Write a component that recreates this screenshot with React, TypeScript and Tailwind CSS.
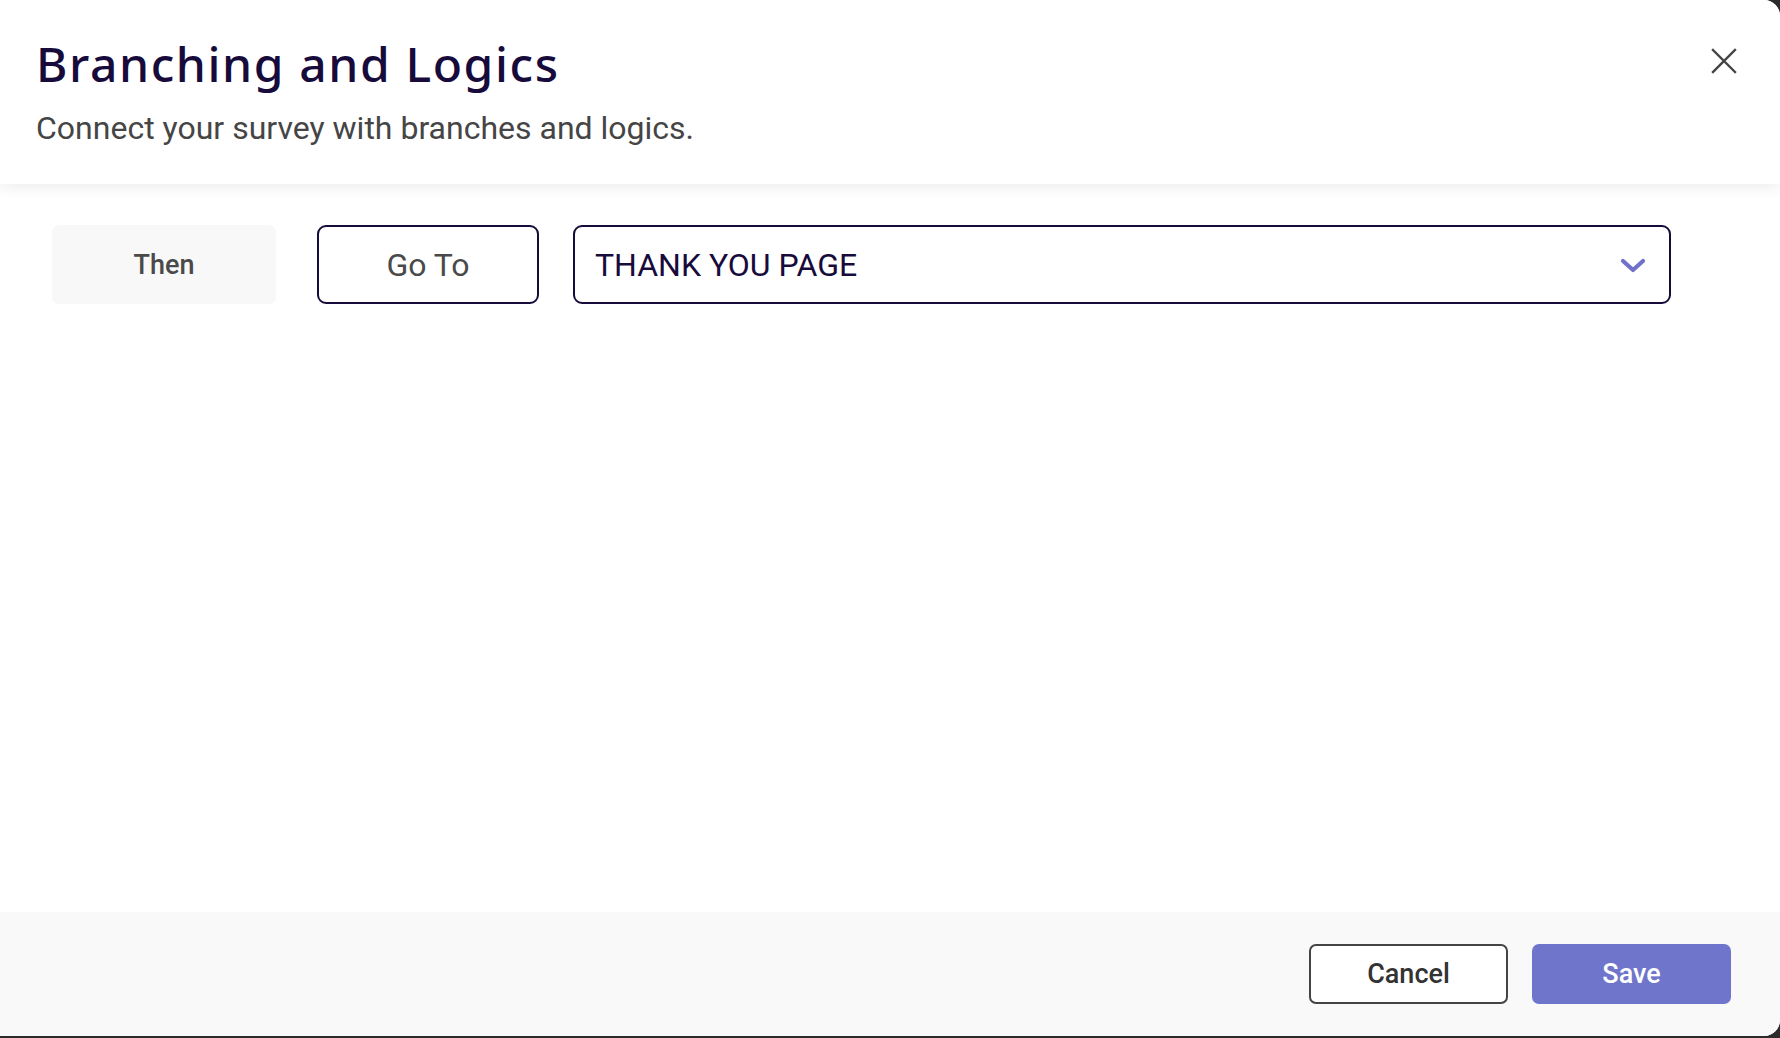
import React from "react";

export default function App() {
  return (
    <div className="w-[1780px] h-[1038px] bg-[#2b2b2b]">
      <div className="relative flex h-[1036px] w-[1780px] flex-col overflow-hidden rounded-r-[16px] bg-white" style={{ fontFamily: "Roboto, 'Liberation Sans', sans-serif" }}>
        <header className="relative z-10 flex h-[184px] shrink-0 items-start justify-between bg-white pl-[36px] pr-[41px] shadow-[0_4px_14px_rgba(0,0,0,0.07)]">
          <div className="pt-[36px]">
            <h1 className="text-[48px] font-medium leading-[56px] tracking-[1.6px] text-[#170b3b]" style={{ fontFamily: "'Noto Sans', Inter, sans-serif" }}>
              Branching and Logics
            </h1>
            <p className="mt-[16px] text-[32px] leading-[40px] text-[#454545]">
              Connect your survey with branches and logics.
            </p>
          </div>
          <button className="mt-[46px] flex h-[30px] w-[30px] items-center justify-center text-[#444]" aria-label="Close">
            <svg width="28" height="28" viewBox="0 0 28 28" fill="none" stroke="currentColor" strokeWidth="2.4" strokeLinecap="square">
              <path d="M3 3 L25 25 M25 3 L3 25" />
            </svg>
          </button>
        </header>

        <main className="flex flex-1 items-start bg-white pl-[52px] pt-[41px]">
          <div className="flex h-[79px] w-[224px] items-center justify-center rounded-[7px] bg-[#f8f8f8] pt-[2px] text-[27px] font-medium text-[#4a4a4a]">
            Then
          </div>
          <button className="ml-[41px] flex h-[79px] w-[222px] items-center justify-center rounded-[9px] border-2 border-[#170b3b] bg-white text-[32px] text-[#4a4a4a]">
            Go To
          </button>
          <div className="ml-[34px] flex h-[79px] w-[1098px] items-center justify-between rounded-[9px] border-2 border-[#170b3b] bg-white pl-[20px] pr-[22px]">
            <span className="text-[32px] text-[#170b3b]">THANK YOU PAGE</span>
            <svg width="28" height="18" viewBox="0 0 28 18" fill="none" stroke="#6f72c9" strokeWidth="4.2" strokeLinecap="round" strokeLinejoin="round">
              <path d="M4 5 L14 14 L24 5" />
            </svg>
          </div>
        </main>

        <footer className="flex h-[124px] shrink-0 items-center justify-end gap-[24px] bg-[#f9f9f9] pr-[49px]">
          <button className="flex h-[60px] w-[199px] items-center justify-center rounded-[7px] border-2 border-[#444] bg-white text-[27px] font-medium text-[#333]">
            Cancel
          </button>
          <button className="flex h-[60px] w-[199px] items-center justify-center rounded-[7px] bg-[#6f75cb] text-[27px] font-medium text-white">
            Save
          </button>
        </footer>
      </div>
    </div>
  );
}
